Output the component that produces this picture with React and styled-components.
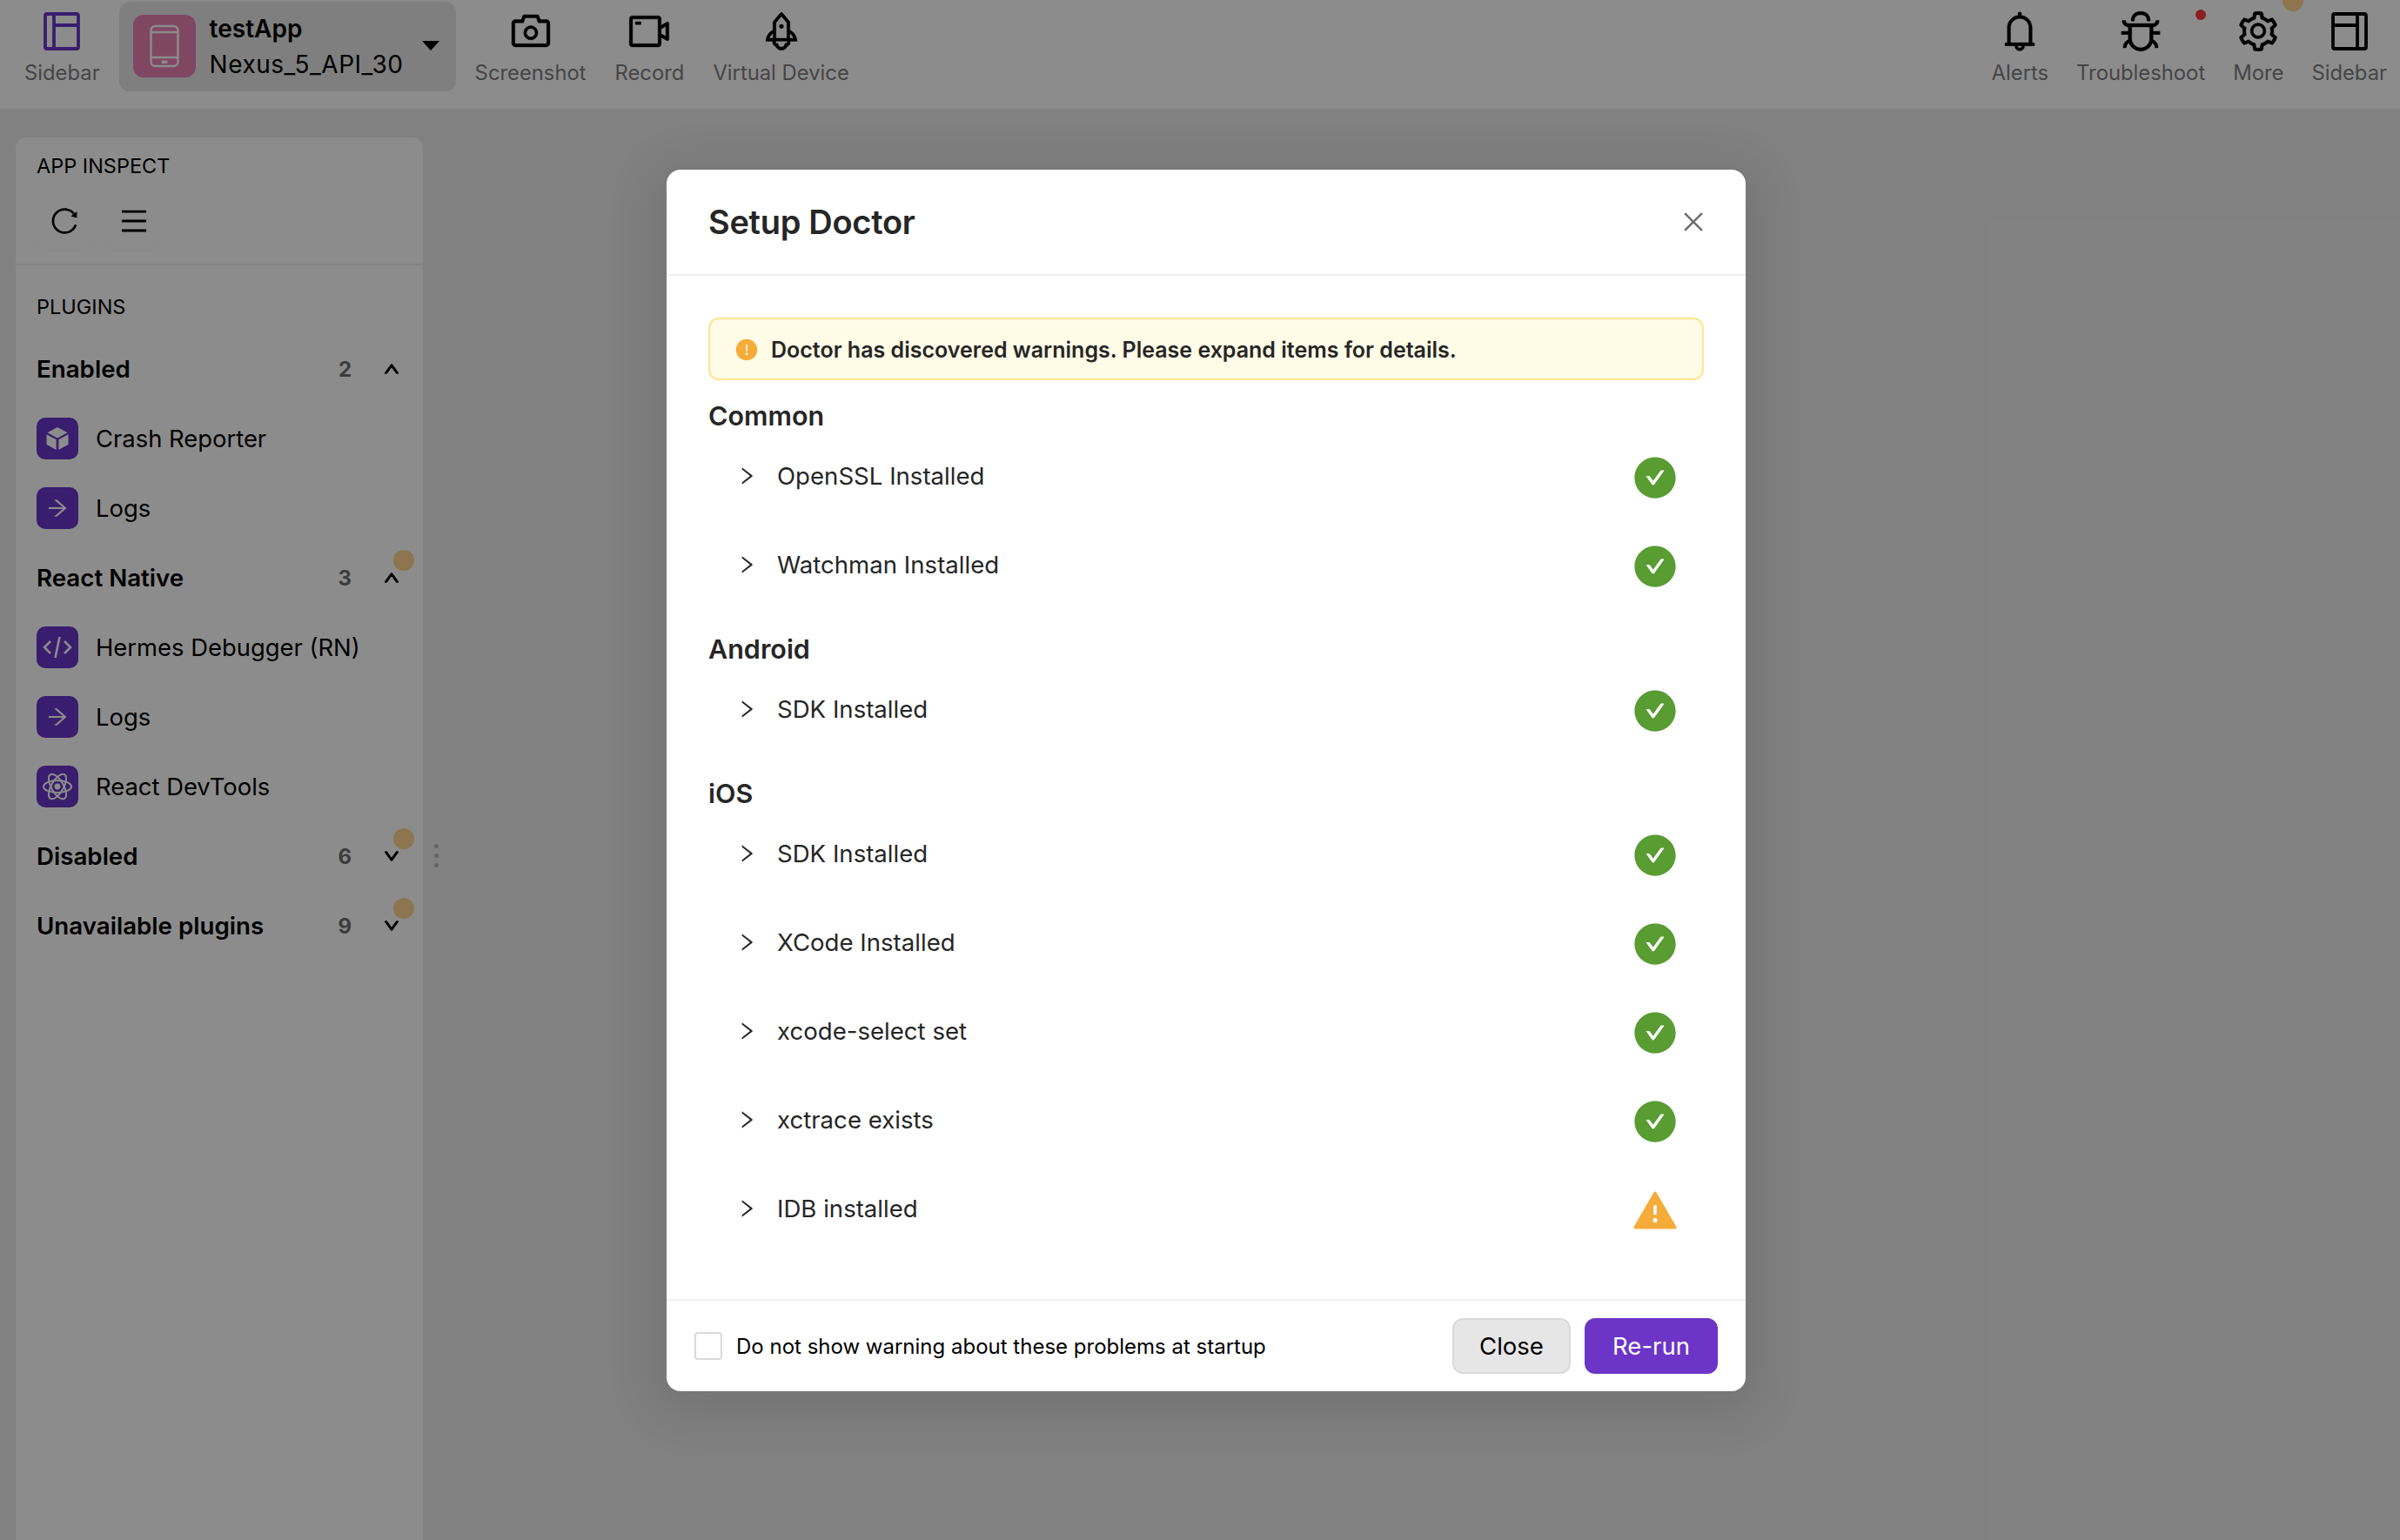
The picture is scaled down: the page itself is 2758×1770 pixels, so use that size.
import React from "react"
import styled, { createGlobalStyle } from "styled-components"
import {
  AiFillCheckCircle,
  AiFillExclamationCircle,
  AiFillWarning,
  AiOutlineArrowRight,
  AiOutlineBell,
  AiOutlineBug,
  AiOutlineCamera,
  AiOutlineClose,
  AiOutlineDown,
  AiOutlineMenu,
  AiOutlineReload,
  AiOutlineRight,
  AiOutlineRocket,
  AiOutlineSetting,
  AiOutlineUp,
  AiOutlineVideoCamera,
} from "react-icons/ai"

const GlobalStyle = createGlobalStyle`
  html, body {
    margin: 0;
    padding: 0;
    background: #ececec;
    font-family: Inter, "Liberation Sans", sans-serif;
    color: #000;
  }
  * {
    box-sizing: border-box;
  }
`

const Page = styled.div`
  position: relative;
  width: 2758px;
  height: 1770px;
  overflow: hidden;
  display: flex;
  flex-direction: column;
`

const Toolbar = styled.header`
  flex: none;
  height: 126px;
  display: flex;
  justify-content: space-between;
  align-items: flex-start;
  padding: 2px 15px 0 28px;
  background: #fff;
  border-bottom: 2px solid #f0f0f0;
`

const ToolGroup = styled.div`
  display: flex;
  align-items: flex-start;
  gap: ${(p) => p.$gap}px;
`

const ToolButton = styled.div`
  position: relative;
  display: flex;
  flex-direction: column;
  align-items: center;
  padding-top: 8px;
`

const ToolIcon = styled.div`
  height: 52px;
  display: flex;
  align-items: center;
  justify-content: center;
  color: ${(p) => p.$color || "#000"};

  svg {
    stroke: currentColor;
    stroke-width: ${(p) => (p.$color || p.$plain ? 3.8 : 8)};
  }
`

const ToolLabel = styled.span`
  margin-top: 6px;
  font-size: 23.8px;
  line-height: 32px;
  color: #7f7f7f;
  white-space: nowrap;
`

const RedDot = styled.span`
  position: absolute;
  top: 9px;
  right: -1px;
  width: 12px;
  height: 12px;
  border-radius: 50%;
  background: #ff3a3a;
`

const TanDot = styled.span`
  position: absolute;
  width: 24px;
  height: 24px;
  border-radius: 50%;
  background: #ffd591;
  top: ${(p) => p.$top}px;
  right: ${(p) => p.$right}px;
`

const DeviceSelect = styled.div`
  width: 387px;
  height: 103px;
  margin: 0 -11px;
  padding: 15px 19px 0 16px;
  display: flex;
  background: #e8e8e8;
  border-radius: 12px;
`

const DeviceIcon = styled.div`
  flex: none;
  width: 72px;
  height: 72px;
  display: flex;
  align-items: center;
  justify-content: center;
  border-radius: 12px;
  background: #e981b4;
  color: #fff;
`

const DeviceText = styled.div`
  flex: 1;
  padding-left: 16px;
  font-size: 28px;
  line-height: 41px;
  letter-spacing: 0.5px;
  white-space: nowrap;
`

const AppName = styled.div`
  font-weight: 600;
  margin-top: -4px;
  letter-spacing: 0;
`

const Caret = styled.span`
  flex: none;
  width: 0;
  height: 0;
  margin-top: 30px;
  border-left: 10px solid transparent;
  border-right: 10px solid transparent;
  border-top: 11px solid #000;
`

const Main = styled.main`
  flex: 1;
  padding: 32px 0 0 18px;
  display: flex;
  background: #ececec;
`

const Sidebar = styled.aside`
  position: relative;
  width: 468px;
  background: #fff;
  border-radius: 12px 12px 0 0;
`

const SidebarHeader = styled.div`
  height: 147px;
  padding: 17px 24px 0;
  border-bottom: 2px solid #f0f0f0;
`

const SmallTitle = styled.div`
  font-size: 23.5px;
  line-height: 32px;
  white-space: nowrap;
`

const IconButtons = styled.div`
  display: flex;
  gap: 16px;
  margin-top: 15px;
`

const IconButton = styled.div`
  width: 64px;
  height: 64px;
  display: flex;
  align-items: center;
  justify-content: center;
  border-radius: 12px;
  box-shadow: 0 3px 0 rgba(0, 0, 0, 0.015);
`

const SidebarBody = styled.div`
  padding-top: 32px;
`

const PluginsTitle = styled(SmallTitle)`
  padding: 0 24px 15px;
`

const SectionHead = styled.div`
  position: relative;
  height: 80px;
  padding: 0 26px 0 24px;
  display: flex;
  align-items: center;

  svg {
    stroke: currentColor;
    stroke-width: 70;
  }
`

const SectionName = styled.div`
  flex: 1;
  font-size: 27.7px;
  font-weight: 600;
  white-space: nowrap;
`

const Count = styled.div`
  font-size: 24px;
  font-weight: 700;
  color: #6e6e6e;
  margin-right: 36px;
`

const PluginRow = styled.div`
  height: 80px;
  padding: 0 24px;
  display: flex;
  align-items: center;
  gap: 20px;
  font-size: 27.4px;
  white-space: nowrap;
`

const PluginIcon = styled.div`
  width: 48px;
  height: 48px;
  display: flex;
  align-items: center;
  justify-content: center;
  border-radius: 10px;
  background: #6936c8;
  color: #fff;
`

const ResizeHandle = styled.div`
  position: absolute;
  top: 812px;
  left: 481px;
  display: flex;
  flex-direction: column;
  gap: 6px;

  span {
    width: 5px;
    height: 5px;
    border-radius: 50%;
    background: #b8b8b8;
  }
`

const Overlay = styled.div`
  position: absolute;
  inset: 0;
  padding: 195px 0 0 766px;
  background: rgba(0, 0, 0, 0.45);
`

const Modal = styled.div`
  width: 1240px;
  height: 1404px;
  display: flex;
  flex-direction: column;
  background: #fff;
  border-radius: 16px;
  box-shadow: 0 12px 56px 16px rgba(0, 0, 0, 0.1);
  color: #262626;
`

const ModalHeader = styled.div`
  flex: none;
  height: 122px;
  padding: 0 48px;
  display: flex;
  align-items: center;
  justify-content: space-between;
  border-bottom: 2px solid #f0f0f0;
`

const ModalTitle = styled.div`
  font-size: 38px;
  font-weight: 600;
  letter-spacing: -0.3px;
`

const CloseIcon = styled.div`
  display: flex;
  color: #6e6e6e;
  margin-right: -4px;
`

const ModalBody = styled.div`
  flex: 1;
  padding: 48px 48px 0;
`

const Alert = styled.div`
  height: 72px;
  margin-bottom: 23px;
  padding: 2px 30px 0;
  display: flex;
  align-items: center;
  gap: 14px;
  background: #fffbe6;
  border: 2px solid #ffe58f;
  border-radius: 12px;
  color: #262626;
  font-size: 25px;
  font-weight: 600;
  white-space: nowrap;
`

const AlertIcon = styled.div`
  display: flex;
  color: #f5ac3a;
  margin-left: -2px;
`

const GroupTitle = styled.div`
  height: 36px;
  margin-top: ${(p) => (p.$first ? 0 : 28)}px;
  font-size: 30.5px;
  font-weight: 600;
  line-height: 36px;
`

const CheckRow = styled.div`
  height: 102px;
  padding: 0 32px 0 31px;
  display: flex;
  align-items: center;
`

const Chevron = styled.div`
  width: 48px;
  display: flex;
  color: #262626;
`

const CheckName = styled.div`
  flex: 1;
  font-size: 27.6px;
`

const Status = styled.div`
  width: 48px;
  height: 48px;
  margin-top: 4px;
  display: flex;
  align-items: center;
  justify-content: center;
  color: ${(p) => p.$color};

  svg {
    flex: none;
  }
`

const ModalFooter = styled.div`
  flex: none;
  height: 106px;
  padding: 0 32px;
  display: flex;
  align-items: center;
  border-top: 2px solid #f0f0f0;
`

const CheckBox = styled.span`
  flex: none;
  width: 32px;
  height: 32px;
  border: 2px solid #d9d9d9;
  border-radius: 4px;
  background: #fff;
`

const CheckLabel = styled.span`
  flex: 1;
  padding-left: 16px;
  font-size: 24px;
  color: #000;
  white-space: nowrap;
`

const Button = styled.div`
  height: 64px;
  width: ${(p) => (p.$primary ? 153 : 136)}px;
  display: flex;
  align-items: center;
  justify-content: center;
  font-size: 27.5px;
  border-radius: 12px;
  color: ${(p) => (p.$primary ? "#fff" : "#000")};
  background: ${(p) => (p.$primary ? "#6c35c7" : "#e6e6e6")};
  border: 2px solid ${(p) => (p.$primary ? "#6c35c7" : "#d9d9d9")};
  margin-left: ${(p) => (p.$primary ? 16 : 0)}px;
`

const PanelIcon = ({ flip }) => (
  <svg width="46" height="48" viewBox="0 0 46 48" fill="none">
    <rect x="4" y="4" width="38" height="40" rx="2" />
    <path d={flip ? "M32 4v40M4 17h28" : "M14 4v40M14 17h28"} />
  </svg>
)

const PhoneIcon = () => (
  <svg width="36" height="50" viewBox="0 0 36 50" fill="none" stroke="currentColor" strokeWidth="2.4">
    <rect x="2.5" y="2" width="31" height="46" rx="5" />
    <path d="M2.5 9h31M2.5 38h31" />
    <rect x="14.5" y="41.5" width="7" height="3.5" rx="1" fill="currentColor" stroke="none" />
  </svg>
)

const CubeIcon = () => (
  <svg width="30" height="30" viewBox="0 0 30 30" fill="currentColor">
    <path d="M15 2l11.5 6.2L15 14.4 3.5 8.2z" />
    <path d="M2.5 10.2L13.6 16.2V28L2.5 22z" />
    <path d="M27.5 10.2L16.4 16.2V28L27.5 22z" />
  </svg>
)

const CodeIcon = () => (
  <svg width="36" height="30" viewBox="0 0 36 30" fill="none" stroke="currentColor" strokeWidth="2.6">
    <path d="M10 8l-7 7 7 7M26 8l7 7-7 7M20.5 3l-5 24" />
  </svg>
)

const AtomIcon = () => (
  <svg width="36" height="36" viewBox="0 0 36 36" fill="none" stroke="currentColor" strokeWidth="2">
    <ellipse cx="18" cy="18" rx="16" ry="7" />
    <ellipse cx="18" cy="18" rx="16" ry="7" transform="rotate(60 18 18)" />
    <ellipse cx="18" cy="18" rx="16" ry="7" transform="rotate(120 18 18)" />
    <circle cx="18" cy="18" r="3.4" fill="currentColor" stroke="none" />
  </svg>
)

const groups = [
  { title: "Common", checks: [["OpenSSL Installed"], ["Watchman Installed"]] },
  { title: "Android", checks: [["SDK Installed"]] },
  {
    title: "iOS",
    checks: [
      ["SDK Installed"],
      ["XCode Installed"],
      ["xcode-select set"],
      ["xctrace exists"],
      ["IDB installed", true],
    ],
  },
]

const pluginSections = [
  {
    name: "Enabled",
    count: 2,
    open: true,
    plugins: [
      ["Crash Reporter", <CubeIcon />],
      ["Logs", <AiOutlineArrowRight size={28} />],
    ],
  },
  {
    name: "React Native",
    count: 3,
    open: true,
    dot: true,
    plugins: [
      ["Hermes Debugger (RN)", <CodeIcon />],
      ["Logs", <AiOutlineArrowRight size={28} />],
      ["React DevTools", <AtomIcon />],
    ],
  },
  { name: "Disabled", count: 6, dot: true, plugins: [] },
  { name: "Unavailable plugins", count: 9, dot: true, plugins: [] },
]

const App = () => (
  <Page>
    <GlobalStyle />
    <Toolbar>
      <ToolGroup $gap={33}>
        <ToolButton>
          <ToolIcon $color="#6936c8">
            <PanelIcon />
          </ToolIcon>
          <ToolLabel>Sidebar</ToolLabel>
        </ToolButton>
        <DeviceSelect>
          <DeviceIcon>
            <PhoneIcon />
          </DeviceIcon>
          <DeviceText>
            <AppName>testApp</AppName>
            Nexus_5_API_30
          </DeviceText>
          <Caret />
        </DeviceSelect>
        <ToolButton>
          <ToolIcon>
            <AiOutlineCamera size={52} />
          </ToolIcon>
          <ToolLabel>Screenshot</ToolLabel>
        </ToolButton>
        <ToolButton>
          <ToolIcon>
            <AiOutlineVideoCamera size={52} />
          </ToolIcon>
          <ToolLabel>Record</ToolLabel>
        </ToolButton>
        <ToolButton>
          <ToolIcon>
            <AiOutlineRocket size={52} />
          </ToolIcon>
          <ToolLabel>Virtual Device</ToolLabel>
        </ToolButton>
      </ToolGroup>
      <ToolGroup $gap={32}>
        <ToolButton>
          <ToolIcon>
            <AiOutlineBell size={52} />
          </ToolIcon>
          <ToolLabel>Alerts</ToolLabel>
        </ToolButton>
        <ToolButton>
          <ToolIcon>
            <AiOutlineBug size={52} />
          </ToolIcon>
          <ToolLabel>Troubleshoot</ToolLabel>
          <RedDot />
        </ToolButton>
        <ToolButton>
          <ToolIcon>
            <AiOutlineSetting size={52} />
          </ToolIcon>
          <ToolLabel>More</ToolLabel>
          <TanDot $top={-13} $right={-23} />
        </ToolButton>
        <ToolButton>
          <ToolIcon $plain>
            <PanelIcon flip />
          </ToolIcon>
          <ToolLabel>Sidebar</ToolLabel>
        </ToolButton>
      </ToolGroup>
    </Toolbar>
    <Main>
      <Sidebar>
        <SidebarHeader>
          <SmallTitle>APP INSPECT</SmallTitle>
          <IconButtons>
            <IconButton>
              <AiOutlineReload size={36} />
            </IconButton>
            <IconButton>
              <AiOutlineMenu size={36} />
            </IconButton>
          </IconButtons>
        </SidebarHeader>
        <SidebarBody>
          <PluginsTitle>PLUGINS</PluginsTitle>
          {pluginSections.map((section) => (
            <React.Fragment key={section.name}>
              <SectionHead>
                <SectionName>{section.name}</SectionName>
                <Count>{section.count}</Count>
                {section.open ? <AiOutlineUp size={20} /> : <AiOutlineDown size={20} />}
                {section.dot && <TanDot $top={8} $right={10} />}
              </SectionHead>
              {section.plugins.map(([name, icon]) => (
                <PluginRow key={name + section.name}>
                  <PluginIcon>{icon}</PluginIcon>
                  {name}
                </PluginRow>
              ))}
            </React.Fragment>
          ))}
        </SidebarBody>
        <ResizeHandle>
          <span />
          <span />
          <span />
        </ResizeHandle>
      </Sidebar>
    </Main>
    <Overlay>
      <Modal>
        <ModalHeader>
          <ModalTitle>Setup Doctor</ModalTitle>
          <CloseIcon>
            <AiOutlineClose size={32} />
          </CloseIcon>
        </ModalHeader>
        <ModalBody>
          <Alert>
            <AlertIcon>
              <AiFillExclamationCircle size={28} />
            </AlertIcon>
            Doctor has discovered warnings. Please expand items for details.
          </Alert>
          {groups.map((group, i) => (
            <React.Fragment key={group.title}>
              <GroupTitle $first={i === 0}>{group.title}</GroupTitle>
              {group.checks.map(([name, warn]) => (
                <CheckRow key={name}>
                  <Chevron>
                    <AiOutlineRight size={26} />
                  </Chevron>
                  <CheckName>{name}</CheckName>
                  <Status $color={warn ? "#f5ac3a" : "#589c32"}>
                    {warn ? <AiFillWarning size={56} /> : <AiFillCheckCircle size={54} />}
                  </Status>
                </CheckRow>
              ))}
            </React.Fragment>
          ))}
        </ModalBody>
        <ModalFooter>
          <CheckBox />
          <CheckLabel>Do not show warning about these problems at startup</CheckLabel>
          <Button>Close</Button>
          <Button $primary>Re-run</Button>
        </ModalFooter>
      </Modal>
    </Overlay>
  </Page>
)

export default App
